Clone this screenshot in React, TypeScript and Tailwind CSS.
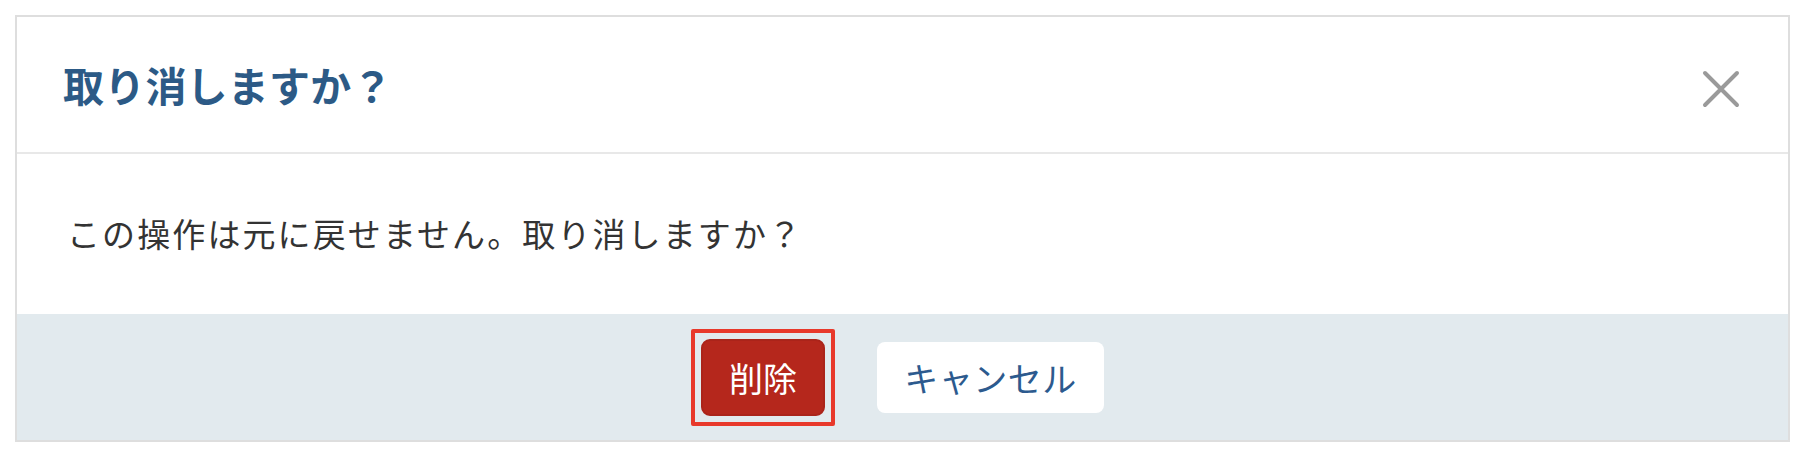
export default function App() {
  return (
    <div className="min-h-screen bg-white pt-[15px] px-[14px] pl-[15px]" style={{ fontFamily: '"Noto Sans CJK JP", "Noto Sans", sans-serif' }}>
      <div className="border-2 border-[#dedede] bg-white">
        {/* Header */}
        <div className="flex h-[137px] items-center justify-between border-b-2 border-[#e8e8e8] pl-[46px] pr-[48px]">
          <h2 className="text-[41px] font-bold tracking-[0.2px] text-[#2c5a86]">取り消しますか？</h2>
          <button className="mt-[8px] flex h-[38px] w-[38px] items-center justify-center text-[#9a9a9a]">
            <svg viewBox="0 0 38 38" className="h-[38px] w-[38px]">
              <path d="M3 3 L35 35 M35 3 L3 35" stroke="currentColor" strokeWidth="4" strokeLinecap="round" fill="none" />
            </svg>
          </button>
        </div>

        {/* Body */}
        <div className="flex h-[160px] items-center px-[50px]">
          <p className="text-[33px] tracking-[2.1px] text-[#333333]">この操作は元に戻せません。取り消しますか？</p>
        </div>

        {/* Footer */}
        <div className="flex h-[126px] items-center justify-center gap-[52px] bg-[#e2eaee]">
          <span className="relative">
            <button className="flex h-[77px] w-[124px] items-center justify-center rounded-[9px] border-2 border-[#ab241a] bg-[#b5271c] text-[34px] text-white">
              削除
            </button>
            <span className="pointer-events-none absolute -inset-[10px] rounded-[2px] border-4 border-[#e8392b]" />
          </span>
          <button className="flex h-[71px] w-[227px] items-center justify-center rounded-[8px] bg-white text-[34px] tracking-[0.5px] text-[#2c5a8e]">
            キャンセル
          </button>
        </div>
      </div>
    </div>
  )
}
